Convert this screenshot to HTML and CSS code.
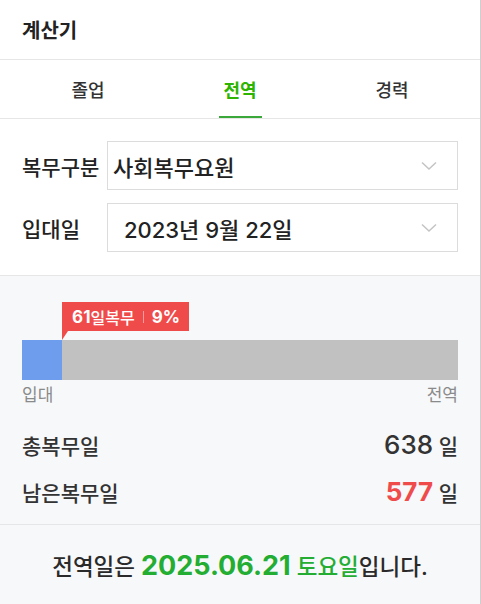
FILE: index.html
```html
<!DOCTYPE html>
<html lang="ko">
<head>
    <meta charset="UTF-8">
    <meta name="viewport" content="width=device-width, initial-scale=1.0">
    <title>계산기</title>
    <link rel="stylesheet" href="styles.css">
</head>
<body>
    <div class="app">
        <header class="top">계산기</header>

        <nav class="tabs">
            <div class="tab">졸업</div>
            <div class="tab active"><span>전역</span></div>
            <div class="tab">경력</div>
        </nav>

        <section class="form">
            <div class="row">
                <label class="label">복무구분</label>
                <div class="select">
                    <span>사회복무요원</span>
                    <svg class="chev" width="16" height="10" viewBox="0 0 16 10"><path d="M1 1.5 L8 8 L15 1.5" fill="none" stroke="#c4c4c4" stroke-width="1.5"/></svg>
                </div>
            </div>
            <div class="row">
                <label class="label">입대일</label>
                <div class="select date">
                    <span>2023년 9월 22일</span>
                    <svg class="chev" width="16" height="10" viewBox="0 0 16 10"><path d="M1 1.5 L8 8 L15 1.5" fill="none" stroke="#c4c4c4" stroke-width="1.5"/></svg>
                </div>
            </div>
        </section>

        <section class="progress">
            <div class="tip-line">
                <div class="tip" style="margin-left: 9.2%">
                    <b>61</b>일복무<i class="sep"></i><b>9%</b>
                </div>
            </div>
            <div class="bar">
                <div class="fill" style="width: 9.2%"></div>
            </div>
            <div class="ends">
                <span>입대</span>
                <span>전역</span>
            </div>

            <div class="stats">
                <div class="stat">
                    <span>총복무일</span>
                    <span class="val"><em>638</em> 일</span>
                </div>
                <div class="stat">
                    <span>남은복무일</span>
                    <span class="val"><em class="red">577</em> 일</span>
                </div>
            </div>

            <div class="result">
                전역일은 <b>2025.06.21</b> <span class="green">토요일</span>입니다.
            </div>
        </section>
    </div>
</body>
</html>
```

FILE: styles.css
```css
body {
    margin: 0;
    padding: 0;
    font-family: Inter, "Noto Sans CJK KR", sans-serif;
    color: #222;
    background: #fff;
}
.app {
    width: 480px;
    height: 604px;
    border-right: 1px solid #cfcfcf;
    background: #f7f8fa;
    overflow: hidden;
}
.top {
    height: 60px;
    box-sizing: border-box;
    padding: 0 22px;
    display: flex;
    align-items: center;
    font-size: 20px;
    font-weight: bold;
    background: #fff;
    border-bottom: 1px solid #e6e6e6;
}
.tabs {
    display: grid;
    grid-template-columns: 1fr 1fr 1fr;
    padding: 0 12px;
    height: 58px;
    background: #fff;
    border-bottom: 1px solid #e6e6e6;
}
.tab {
    display: flex;
    align-items: center;
    justify-content: center;
    font-size: 18px;
    font-weight: 500;
    color: #333;
}
.tab.active {
    color: #2db400;
    font-weight: bold;
}
.tab.active span {
    height: 100%;
    width: 43px;
    box-sizing: border-box;
    display: flex;
    align-items: center;
    justify-content: center;
    border-bottom: 2px solid #3aa83a;
    padding-top: 2px;
}
.form {
    background: #fff;
    padding: 22px 22px 23px;
    display: flex;
    flex-direction: column;
    gap: 13px;
    border-bottom: 1px solid #e6e6e6;
}
.row {
    display: flex;
    align-items: center;
}
.label {
    width: 85px;
    font-size: 21px;
    font-weight: 500;
    color: #222;
    white-space: nowrap;
}
.select {
    flex: 1;
    height: 49px;
    box-sizing: border-box;
    border: 1px solid #dcdcdc;
    padding: 0 20px 0 5px;
    display: flex;
    align-items: center;
    justify-content: space-between;
    font-size: 22px;
    font-weight: 500;
    color: #222;
}
.select.date {
    padding-left: 16px;
}
.progress {
    padding-top: 26px;
}
.tip-line {
    padding: 0 22px;
}
.tip {
    position: relative;
    display: inline-flex;
    align-items: center;
    height: 29px;
    padding: 0 9px 0 10px;
    background: #f04b4b;
    color: #fff;
    font-size: 16px;
    font-weight: 500;
}
.tip::after {
    content: "";
    position: absolute;
    left: 0;
    top: 29px;
    border-left: 6px solid #f04b4b;
    border-bottom: 9px solid transparent;
}
.tip b {
    font-size: 17px;
    font-weight: bold;
}
.sep {
    display: inline-block;
    width: 1px;
    height: 12px;
    background: rgba(255, 255, 255, 0.45);
    margin: 0 8px;
}
.bar {
    margin: 9px 22px 0;
    height: 40px;
    background: #c1c1c1;
}
.fill {
    height: 100%;
    background: #6f9ded;
}
.ends {
    display: flex;
    justify-content: space-between;
    padding: 1px 22px 0;
    font-size: 17px;
    color: #8a8a8a;
}
.stats {
    padding: 15px 22px 9px;
    border-bottom: 1px solid #e6e6e6;
}
.stat {
    height: 47px;
    display: flex;
    align-items: center;
    justify-content: space-between;
    font-size: 21px;
    font-weight: 500;
    color: #333;
}
.val em {
    font-style: normal;
    font-size: 26px;
    font-weight: 500;
    color: #333;
}
.val em.red {
    color: #f04b4b;
    font-weight: bold;
}
.result {
    padding-top: 24px;
    text-align: center;
    font-size: 22.5px;
    font-weight: 500;
    color: #2a2a2a;
}
.result b {
    font-size: 27px;
    color: #23ad32;
}
.green {
    color: #23ad32;
}
```
